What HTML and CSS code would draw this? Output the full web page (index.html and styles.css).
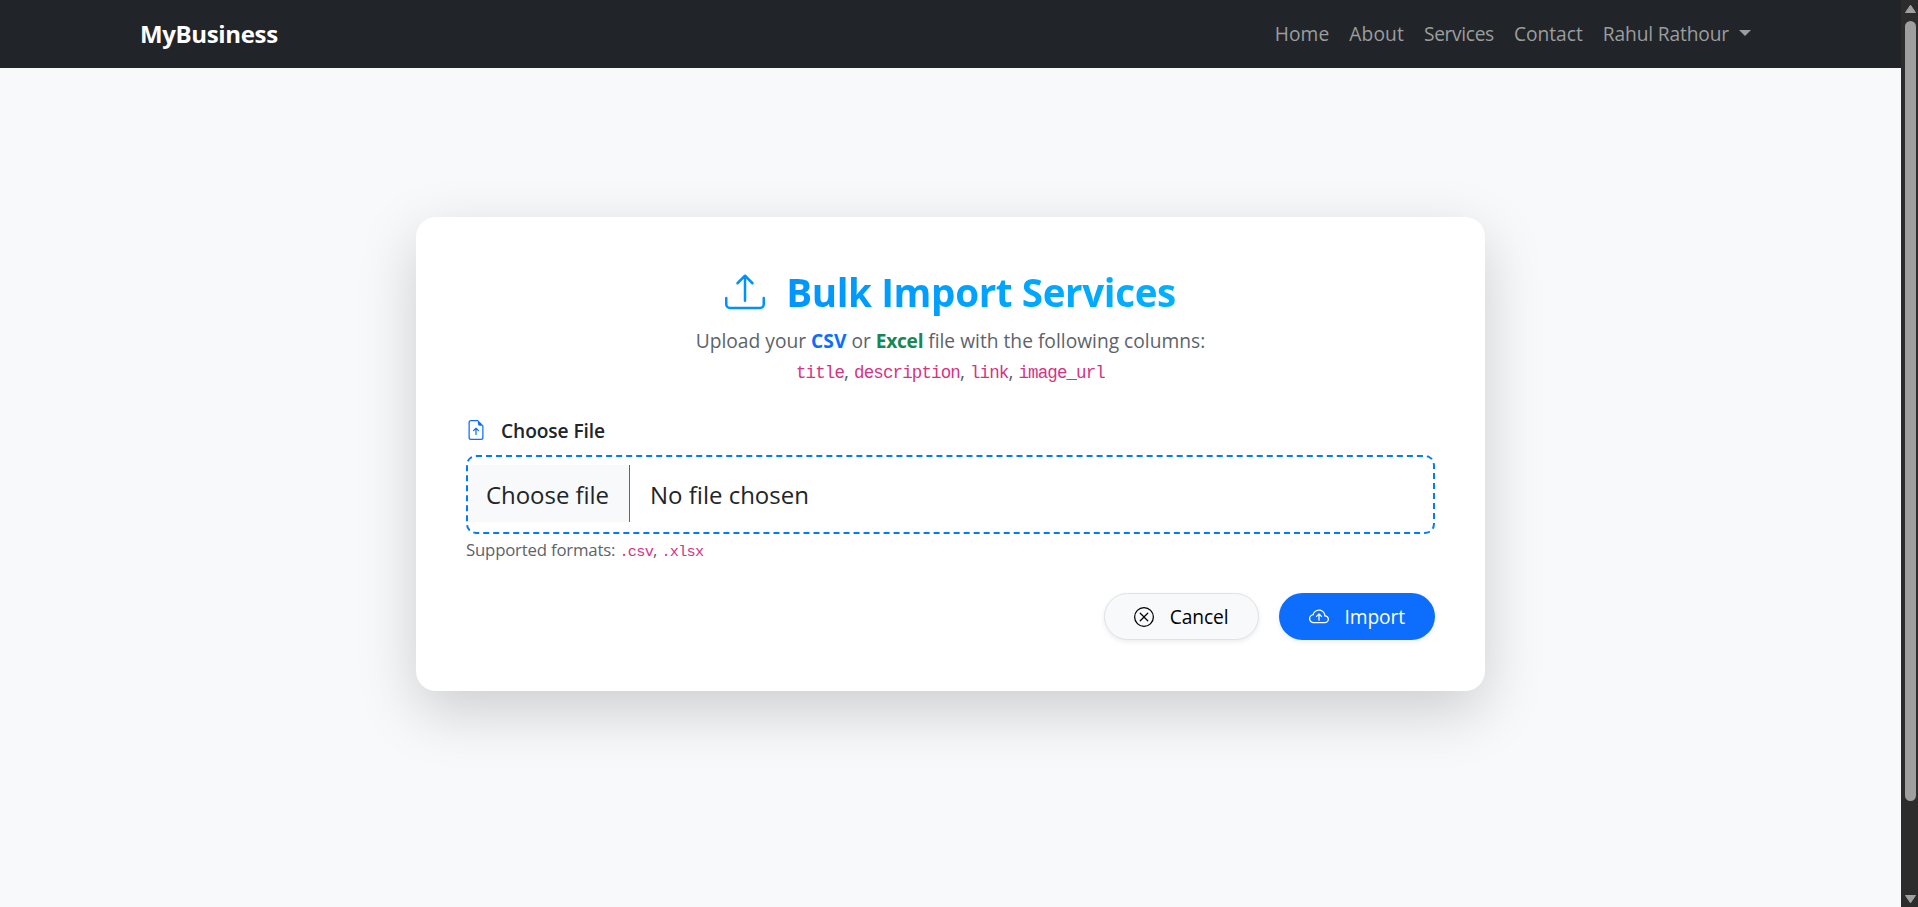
FILE: index.html
```html
<!DOCTYPE html>
<html lang="en">
<head>
<meta charset="utf-8">
<title>Bulk Import Services</title>
<link rel="stylesheet" href="styles.css">
</head>
<body>
<div class="page">
  <div class="content">
    <header class="navbar">
      <a class="brand">MyBusiness</a>
      <nav class="nav">
        <a class="nav-link nav-home">Home</a>
        <a class="nav-link nav-about">About</a>
        <a class="nav-link nav-services">Services</a>
        <a class="nav-link nav-contact">Contact</a>
        <a class="nav-link nav-user">Rahul Rathour<span class="caret"></span></a>
      </nav>
    </header>
    <main class="main">
      <section class="card">
        <h2 class="title">
          <svg class="title-icon" viewBox="0 0 16 16">
            <path d="M.5 9.9a.5.5 0 0 1 .5.5v2.5a1 1 0 0 0 1 1h12a1 1 0 0 0 1-1v-2.5a.5.5 0 0 1 1 0v2.5a2 2 0 0 1-2 2H2a2 2 0 0 1-2-2v-2.5a.5.5 0 0 1 .5-.5"/>
            <path d="M7.646 1.146a.5.5 0 0 1 .708 0l3 3a.5.5 0 0 1-.708.708L8.5 2.707V11.5a.5.5 0 0 1-1 0V2.707L5.354 4.854a.5.5 0 1 1-.708-.708z"/>
          </svg>
          <span class="title-text">Bulk Import Services</span>
        </h2>
        <p class="lead">Upload your <strong class="csv">CSV</strong> or <strong class="excel">Excel</strong> file with the following columns:<br><code>title</code>, <code>description</code>, <code>link</code>, <code>image_url</code></p>
        <label class="label">
          <svg class="label-icon" viewBox="0 0 16 16">
            <path d="M8.5 11.5a.5.5 0 0 1-1 0V7.707L6.354 8.854a.5.5 0 1 1-.708-.708l2-2a.5.5 0 0 1 .708 0l2 2a.5.5 0 0 1-.708.708L8.5 7.707z"/>
            <path d="M14 14V4.5L9.5 0H4a2 2 0 0 0-2 2v12a2 2 0 0 0 2 2h8a2 2 0 0 0 2-2M9.5 3A1.5 1.5 0 0 0 11 4.5h2V14a1 1 0 0 1-1 1H4a1 1 0 0 1-1-1V2a1 1 0 0 1 1-1h5.5z"/>
          </svg>
          <span class="label-text">Choose File</span>
        </label>
        <div class="file">
          <span class="file-button">Choose file</span>
          <span class="file-name">No file chosen</span>
        </div>
        <div class="hint">Supported formats: <code>.csv</code>, <code>.xlsx</code></div>
        <div class="actions">
          <a class="btn btn-light">
            <svg class="btn-icon" viewBox="0 0 16 16">
              <path d="M8 15A7 7 0 1 1 8 1a7 7 0 0 1 0 14m0 1A8 8 0 1 0 8 0a8 8 0 0 0 0 16"/>
              <path d="M4.646 4.646a.5.5 0 0 1 .708 0L8 7.293l2.646-2.647a.5.5 0 0 1 .708.708L8.707 8l2.647 2.646a.5.5 0 0 1-.708.708L8 8.707l-2.646 2.647a.5.5 0 0 1-.708-.708L7.293 8 4.646 5.354a.5.5 0 0 1 0-.708"/>
            </svg>
            <span>Cancel</span>
          </a>
          <a class="btn btn-primary">
            <svg class="btn-icon" viewBox="0 0 16 16">
              <path fill-rule="evenodd" d="M7.646 5.146a.5.5 0 0 1 .708 0l2 2a.5.5 0 0 1-.708.708L8.5 6.707V10.5a.5.5 0 0 1-1 0V6.707L6.354 7.854a.5.5 0 1 1-.708-.708z"/>
              <path d="M4.406 3.342A5.53 5.53 0 0 1 8 2c2.69 0 4.923 2 5.166 4.579C14.758 6.804 16 8.137 16 9.773 16 11.569 14.502 13 12.687 13H3.781C1.708 13 0 11.366 0 9.318c0-1.763 1.266-3.223 2.942-3.593.143-.863.698-1.723 1.464-2.383m.653.757c-.757.653-1.153 1.44-1.153 2.056v.448l-.445.049C2.064 6.805 1 7.952 1 9.318 1 10.785 2.23 12 3.781 12h8.906C13.98 12 15 10.988 15 9.773c0-1.216-1.02-2.228-2.313-2.228h-.5v-.5C12.188 4.825 10.328 3 8 3a4.53 4.53 0 0 0-2.941 1.1z"/>
            </svg>
            <span>Import</span>
          </a>
        </div>
      </section>
    </main>
  </div>
  <div class="scrollbar">
    <svg class="arrow" viewBox="0 0 13 10"><path d="M6.500 1.200 11.500 8.500H1.500z"/></svg>
    <div class="thumb"></div>
    <svg class="arrow arrow-down" viewBox="0 0 13 10"><path d="M1.500 1.500h10L6.500 8.800z"/></svg>
  </div>
</div>
</body>
</html>
```
FILE: styles.css
```css
* { box-sizing: border-box; }
body {
  margin: 0;
  background: #f8f9fa;
  color: #212529;
  font: 19.2px/30px "Open Sans", "Noto Sans", sans-serif;
  overflow: hidden;
}
.page { display: flex; height: 907px; }
.content { flex: 1; display: flex; flex-direction: column; overflow: hidden; background: #f8f9fb; }

.navbar {
  height: 68px;
  padding: 0 150px 0 140px;
  background: #212529;
  display: flex;
  align-items: center;
  justify-content: space-between;
}
.brand { color: #fff; font-size: 24px; font-weight: 700; letter-spacing: -.35px; }
.nav { display: flex; gap: 20px; color: #9b9d9e; }
.nav-link { white-space: nowrap; }
.nav-home { letter-spacing: .05px; }
.nav-about { letter-spacing: .15px; }
.nav-services { letter-spacing: -.35px; }
.nav-contact { letter-spacing: 0; }
.nav-user { letter-spacing: -.15px; }
.caret {
  display: inline-block;
  margin-left: 10px;
  vertical-align: 5px;
  border: 6px solid transparent;
  border-top-color: currentColor;
  border-bottom: 0;
}

.main { flex: 1; padding: 149px 0 0 416px; }
.card {
  width: 1069px;
  height: 474px;
  padding: 50px;
  background: #fff;
  border-radius: 20px;
  box-shadow: 0 20px 60px rgba(0, 0, 0, .175);
}
.title {
  margin: 0 0 11px;
  height: 48px;
  display: flex;
  align-items: center;
  justify-content: center;
  gap: 20px;
  font-size: 38.6px;
  line-height: 48px;
}
.title-icon { width: 40px; height: 40px; margin-top: 1px; fill: #0091ff; }
.title-text {
  letter-spacing: -.38px;
  padding: 2px 0 0 1px;
  background: linear-gradient(90deg, #0095ff, #00b1ff);
  -webkit-background-clip: text;
  background-clip: text;
  color: transparent;
}
.lead { margin: 0 0 29px; text-align: center; color: #5c636a; letter-spacing: .01px; }
.lead strong { font-weight: 700; }
.lead .csv { color: #0d6efd; }
.lead .excel { color: #198754; letter-spacing: -.3px; }
code { font: 17.5px/1 "Liberation Mono", monospace; letter-spacing: -.88px; color: #d63384; }

.label { display: flex; align-items: center; gap: 15px; margin-bottom: 10px; font-weight: 600; }
.label-icon { width: 20px; height: 20px; fill: #0d6efd; }
.label-text { padding-top: 1px; margin-bottom: -1px; letter-spacing: -.1px; }

.file {
  height: 79px;
  border: 2px dashed #007bff;
  border-radius: 10px;
  display: flex;
  align-items: center;
  font-size: 24px;
}
.file-button {
  width: 162px;
  height: 57px;
  margin-top: -2px;
  padding-left: 18px;
  line-height: 60px;
  letter-spacing: -.05px;
  background: #f8f9fa;
  border-right: 1px solid #007bff;
}
.file-name { padding-left: 20px; }
.hint { margin-top: 3px; font-size: 16.8px; line-height: 26px; color: #5c636a; letter-spacing: -.2px; }
.hint code { font-size: 15.3px; letter-spacing: -.77px; }

.actions { display: flex; justify-content: flex-end; gap: 20px; margin-top: 30px; }
.btn {
  height: 47px;
  display: flex;
  align-items: center;
  gap: 15.500px;
  padding: 0 29px 0 29.500px;
  border: 1px solid transparent;
  border-radius: 24px;
  box-shadow: 0 2px 5px rgba(0, 0, 0, .075);
  letter-spacing: -.1px;
}
.btn span { padding-top: 1px; }
.btn-icon { width: 20px; height: 20px; fill: currentColor; }
.btn-light { background: #f8f9fa; border-color: #dee2e6; color: #000; }
.btn-primary { background: #0d6efd; color: #fff; }

.scrollbar {
  width: 17px;
  padding: 3px 0 2px 2px;
  background: #2c2c2c;
  display: flex;
  flex-direction: column;
  align-items: center;
}
.arrow { width: 13px; height: 12px; fill: #9f9f9f; stroke: #9f9f9f; stroke-linejoin: round; }
.thumb { width: 11px; height: 780px; margin: 6px 0 auto; border-radius: 6px; background: #9f9f9f; }
```
